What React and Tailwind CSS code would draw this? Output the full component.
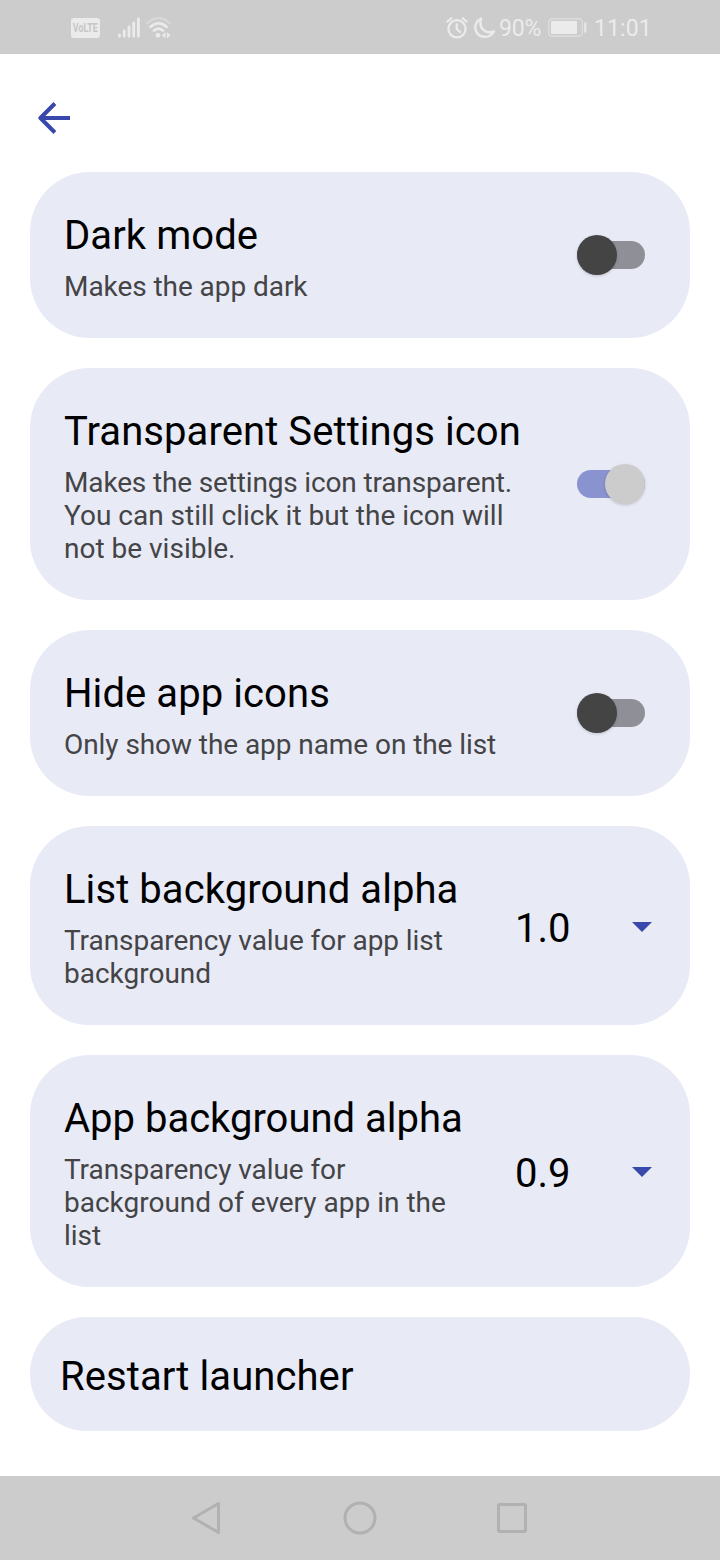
import React from "react";

function StatusBar() {
  return (
    <header className="flex h-[54px] shrink-0 items-center bg-[#cccccc] pl-[71px] text-[#ebebeb]">
      <span className="mt-[2px] flex h-5 w-[29px] shrink-0 items-center justify-center rounded-[3px] bg-[#ebebeb]">
        <span className="scale-x-[0.68] text-[13px] leading-5 font-bold text-[#c6c6c6]">VoLTE</span>
      </span>
      <svg width="22" height="22" viewBox="0 0 22 22" className="mt-px ml-[18px]" stroke="#ebebeb" strokeWidth="2.8" strokeLinecap="round">
        <path d="M1.5 18.200V19.300M6.200 14V19.300M11 10V19.300M15.700 5.800V19.300M20.400 1.800V19.300" />
      </svg>
      <svg width="26" height="22" viewBox="0 0 26 22" className="mt-px ml-[6px]" fill="none" stroke="#ebebeb" strokeLinecap="round">
        <path d="M1.300 6.200C8-.3 17-.3 23.700 6.200" strokeWidth="2" stroke="#dadada" />
        <path d="M4.300 10C9.500 5 15.500 5 20.700 10" strokeWidth="2.500" />
        <path d="M7.800 13.700C11 10.800 14 10.800 17.200 13.700" strokeWidth="2.500" />
        <circle cx="12" cy="18.300" r="2.300" fill="#ebebeb" stroke="none" />
        <path d="M19.500 15.200V21.200L16 18.200ZM21 15.200V21.200L24.500 18.200Z" fill="#ebebeb" stroke="none" />
      </svg>
      <svg width="22" height="22" viewBox="0 0 22 22" className="mt-px ml-[274px]" fill="none" stroke="#ebebeb" strokeLinecap="round" strokeLinejoin="round">
        <circle cx="11" cy="11.800" r="8.600" strokeWidth="2.300" />
        <path d="M1.500 4.500L5.200 1.300M20.500 4.500L16.800 1.300" strokeWidth="2.300" />
        <path d="M10.800 7.500V12L14 15" strokeWidth="2.300" />
      </svg>
      <svg width="22" height="22" viewBox="0 0 22 22" className="mt-px ml-[6px]" fill="none" stroke="#ebebeb" strokeWidth="2.400" strokeLinejoin="round">
        <path d="M7 1.500C2.500 3.500.2 8.800 1.800 13.500C4.500 21 15.500 22.500 20 14.500C11 17.500 4.500 11 7 1.500Z" />
      </svg>
      <span className="mt-[3px] ml-[3px] w-[43px] whitespace-nowrap text-[23px] leading-[28px] tracking-[-0.2px]">90%</span>
      <svg width="40" height="20" viewBox="0 0 40 20" className="mt-[2px] ml-[6px]">
        <rect x=".8" y=".8" width="33.500" height="17.500" rx="3.500" fill="none" stroke="#dddddd" strokeWidth="1.400" />
        <rect x="3" y="3" width="26" height="13" fill="#ebebeb" />
        <rect x="36" y="4.200" width="2.500" height="10.500" rx="1" fill="#e4e4e4" />
      </svg>
      <span className="mt-[3px] ml-[6px] whitespace-nowrap text-[23px] leading-[28px] tracking-[0.1px]">11:01</span>
    </header>
  );
}

function Switch({ on }) {
  return (
    <button role="switch" aria-checked={on} className={`flex h-10 w-[68px] shrink-0 items-center ${on ? "justify-end" : "justify-start"}`}>
      <span className={`flex h-7 w-full items-center rounded-full ${on ? "justify-end bg-[#8993cf]" : "justify-start bg-[#8f8f98]"}`}>
        <span className={`size-10 shrink-0 rounded-full shadow-[0_1px_3px_rgba(0,0,0,0.18)] ${on ? "bg-[#cccccc]" : "bg-[#444444]"}`} />
      </span>
    </button>
  );
}

function Setting({ title, titleClass = "tracking-[0.08px]", textClass = "", children, control }) {
  return (
    <section className="flex items-center justify-between rounded-[60px] bg-[#e8eaf6] pt-10 pr-[45px] pb-[35px] pl-[34px]">
      <div className="whitespace-nowrap">
        <h2 className={`text-[40px] leading-[47px] text-black ${titleClass}`}>{title}</h2>
        <p className={`mt-[11px] text-[28px] leading-[33px] text-[#444446] ${textClass}`}>{children}</p>
      </div>
      <div className="-mt-[5px] flex">{control}</div>
    </section>
  );
}

function Dropdown({ value }) {
  return (
    <button className="-mr-[7px] flex items-center">
      <span className="mt-[5px] text-[40px] leading-[47px] text-black">{value}</span>
      <svg width="20" height="10" viewBox="0 0 20 10" className="mt-[2px] ml-[61.500px]">
        <path d="M0 0H20L10 10Z" fill="#3949ab" />
      </svg>
    </button>
  );
}

function NavBar() {
  return (
    <nav className="flex h-[84px] shrink-0 items-center justify-center bg-[#cccccc]">
      <svg width="336" height="34" viewBox="0 0 336 34" fill="none" stroke="#b1b1b1" strokeWidth="3" strokeLinejoin="round">
        <path d="M26.500 2.500V31.500L1.500 17Z" />
        <circle cx="168" cy="17" r="15" />
        <rect x="306.500" y="3.500" width="27" height="27" rx="1" />
      </svg>
    </nav>
  );
}

export default function App() {
  return (
    <div className="flex h-[1560px] w-[720px] flex-col overflow-hidden bg-white font-[Roboto,sans-serif]">
      <StatusBar />
      <div className="flex h-[118px] shrink-0 items-center pt-[10px] pl-[38px]">
        <svg width="32" height="32" viewBox="0 0 32 32" fill="none" stroke="#3949ab" strokeWidth="4" strokeLinejoin="round">
          <path d="M32 16H3M16.900 1.500L2.400 16L16.900 30.500" />
        </svg>
      </div>
      <main className="flex flex-1 flex-col gap-[30px] px-[30px]">
        <Setting title="Dark mode" textClass="tracking-[-0.06px]" control={<Switch on={false} />}>
          Makes the app dark
        </Setting>
        <Setting title="Transparent Settings icon" control={<Switch on />}>
          <span className="tracking-[-0.15px]">Makes the settings icon transparent.</span>
          <br />
          You can still click it but the icon will
          <br />
          not be visible.
        </Setting>
        <Setting title="Hide app icons" textClass="tracking-[-0.07px]" control={<Switch on={false} />}>
          Only show the app name on the list
        </Setting>
        <Setting title="List background alpha" control={<Dropdown value="1.0" />}>
          <span className="tracking-[-0.06px]">Transparency value for app list</span>
          <br />
          background
        </Setting>
        <Setting title="App background alpha" titleClass="tracking-normal" control={<Dropdown value="0.9" />}>
          <span className="tracking-[-0.07px]">Transparency value for</span>
          <br />
          background of every app in the
          <br />
          list
        </Setting>
        <button className="flex h-[114px] items-center rounded-[57px] bg-[#e8eaf6] pt-1 pl-[30px] text-[40px] leading-[47px] tracking-[0.08px] text-black">Restart launcher</button>
      </main>
      <NavBar />
    </div>
  );
}
